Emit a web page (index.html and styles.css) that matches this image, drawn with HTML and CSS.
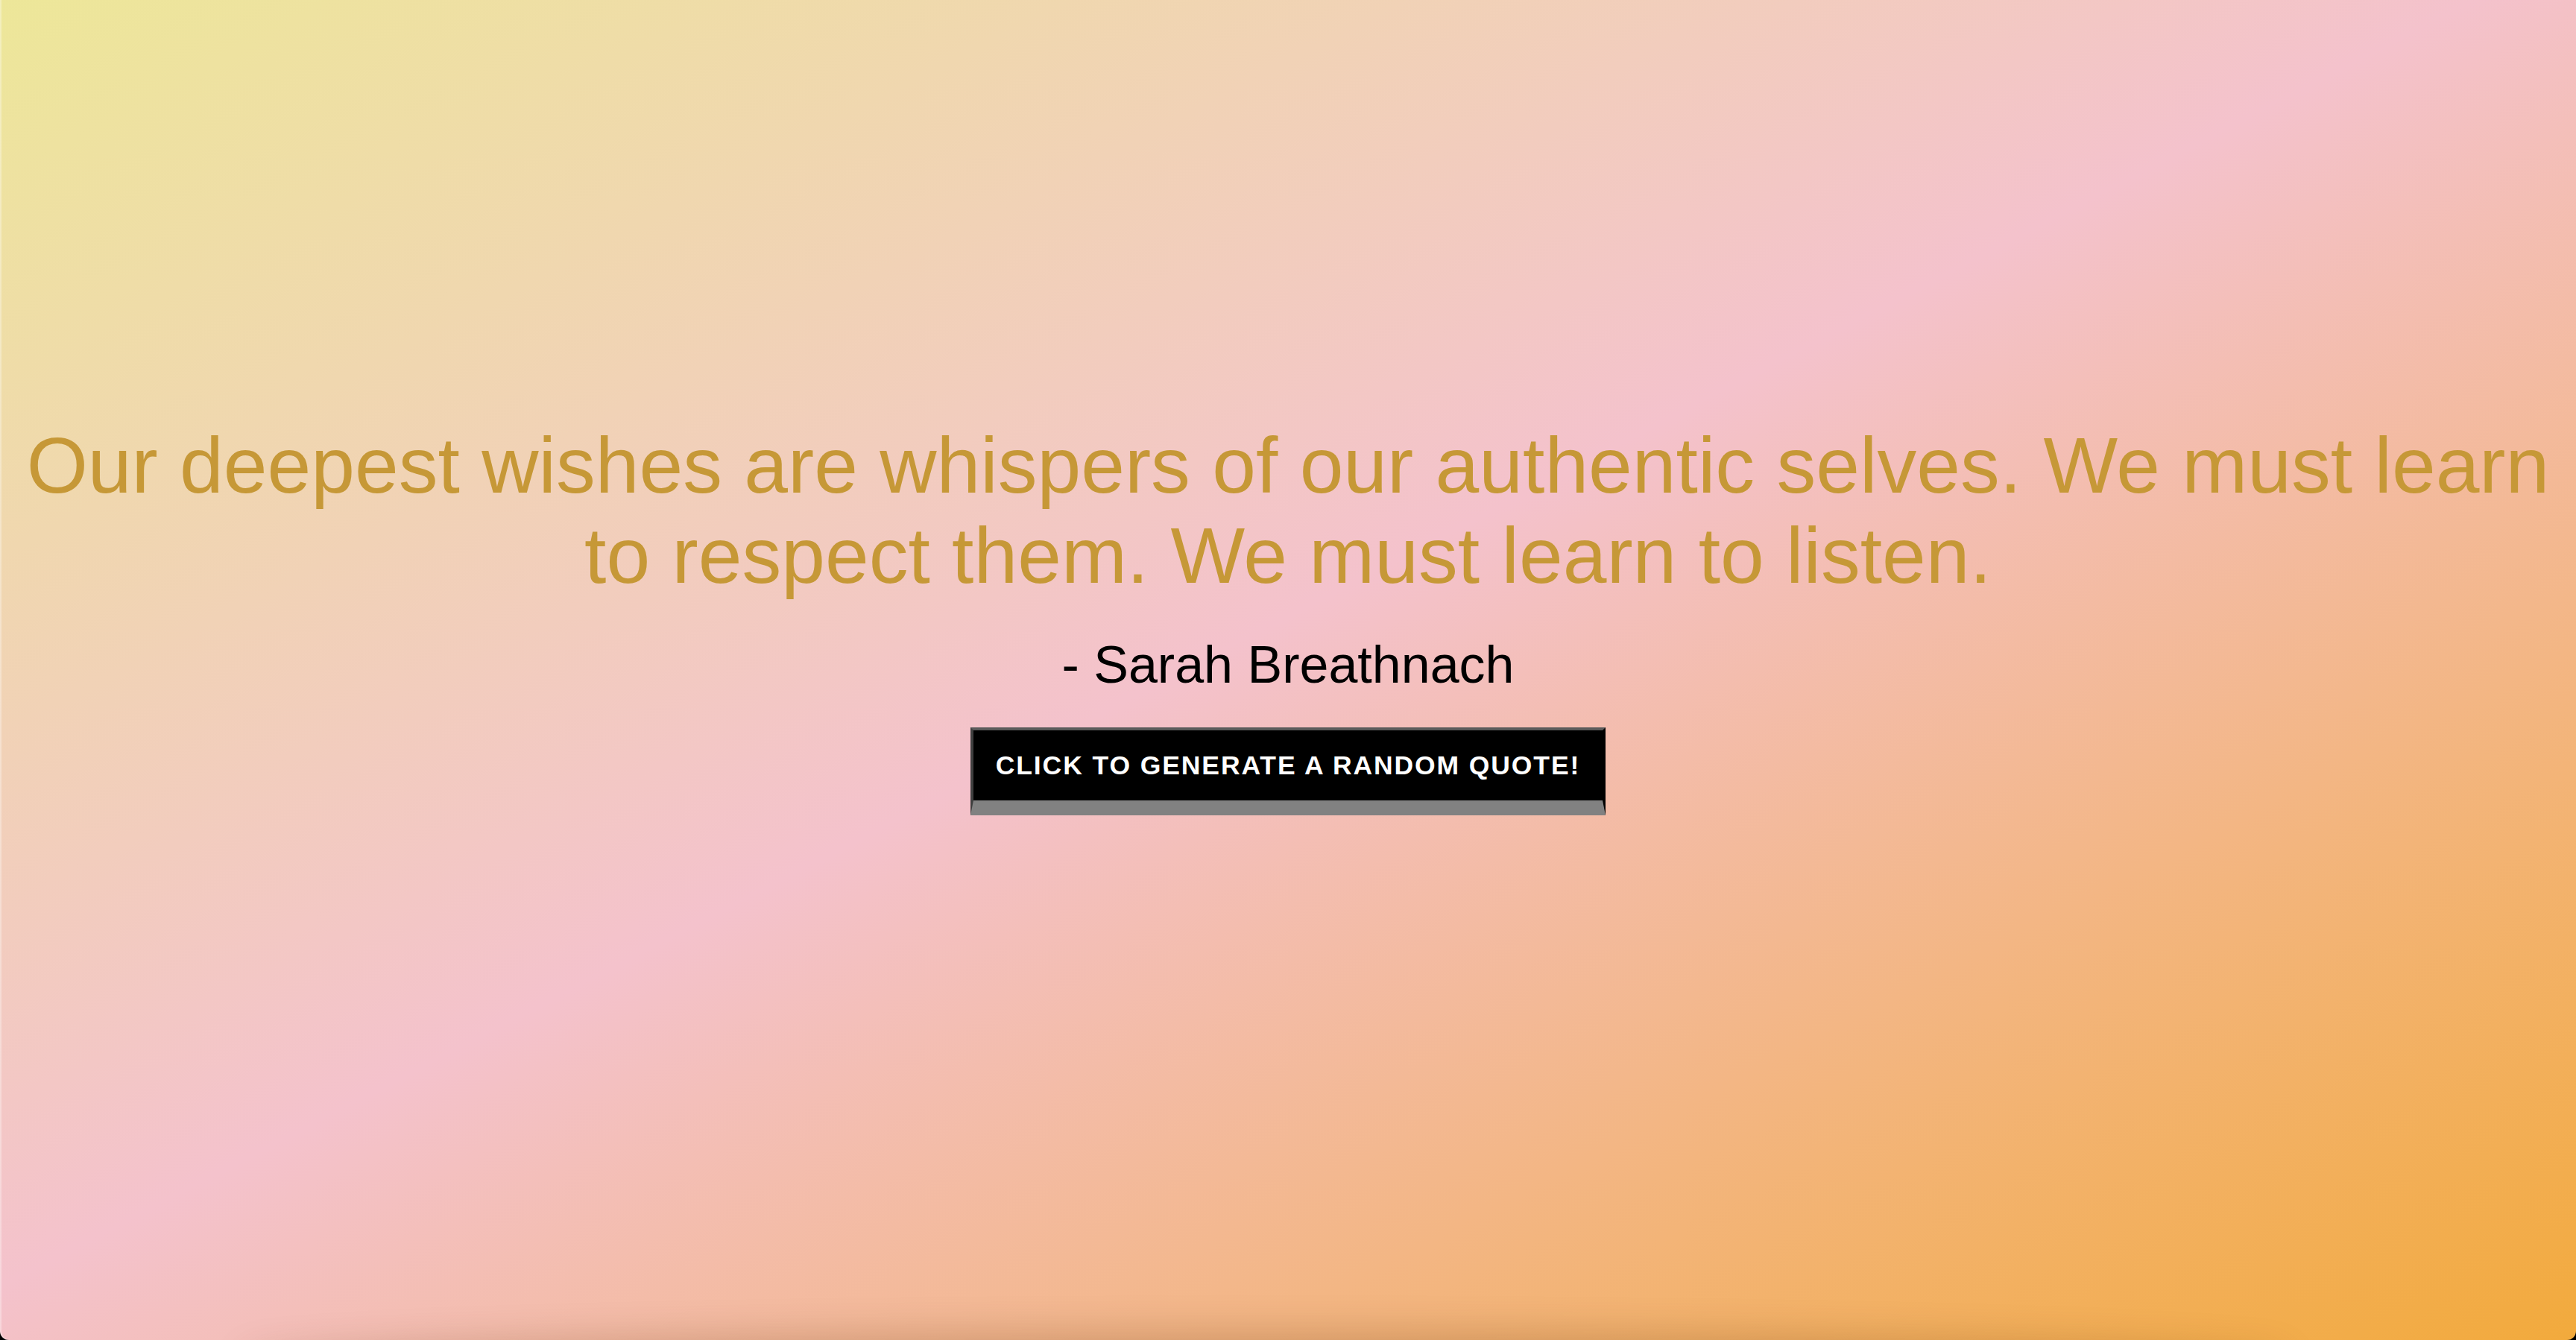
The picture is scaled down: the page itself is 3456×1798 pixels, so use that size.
FILE: index.html
```html
<!DOCTYPE html>
<html lang="en">
<head>
<meta charset="utf-8">
<title>Random Quote Generator</title>
<link rel="stylesheet" href="styles.css">
</head>
<body>
<main class="page">
  <section class="quote-box">
    <p class="quote-text">Our deepest wishes are whispers of our authentic selves. We must learn to respect them. We must learn to listen.</p>
    <p class="quote-author">- Sarah Breathnach</p>
    <button class="quote-button" type="button">Click to generate a random quote!</button>
  </section>
  <div class="bottom-shade"></div>
</main>
</body>
</html>
```
FILE: styles.css
```css
html {
  background: #000;
}
body {
  margin: 0;
  font-family: "Liberation Sans", Arial, Helvetica, sans-serif;
}
.page {
  position: relative;
  overflow: hidden;
  height: 1798px;
  border-radius: 0 0 12px 12px;
  background: linear-gradient(to bottom right, #ede799 0%, #f4c2cc 48%, #f2aa3c 100%);
  box-shadow: inset 2px 0 0 rgba(255, 255, 255, 0.35);
}
.quote-box {
  display: flex;
  flex-direction: column;
  align-items: center;
  padding: 564px 16px 0;
}
.quote-text {
  margin: 0;
  font-size: 105.6px;
  line-height: 121px;
  color: #c69837;
  text-align: center;
}
.quote-author {
  margin: 46px 0 0;
  font-size: 70px;
  line-height: 80px;
  color: #000;
}
.quote-button {
  margin-top: 44px;
  height: 118px;
  padding: 0 30px;
  background: #000;
  color: #fff;
  font-family: "Liberation Sans", Arial, Helvetica, sans-serif;
  font-weight: 700;
  font-size: 35.5px;
  letter-spacing: 1.9px;
  text-transform: uppercase;
  border-style: solid;
  border-width: 4px 4px 20px 4px;
  border-color: #5a5a5a #000 #818181 #3f3f3f;
  cursor: pointer;
}
.bottom-shade {
  position: absolute;
  left: 330px;
  right: 390px;
  bottom: -60px;
  height: 60px;
  border-radius: 50%;
  box-shadow: 0 0 50px 10px rgba(90, 40, 0, 0.22);
}
```
